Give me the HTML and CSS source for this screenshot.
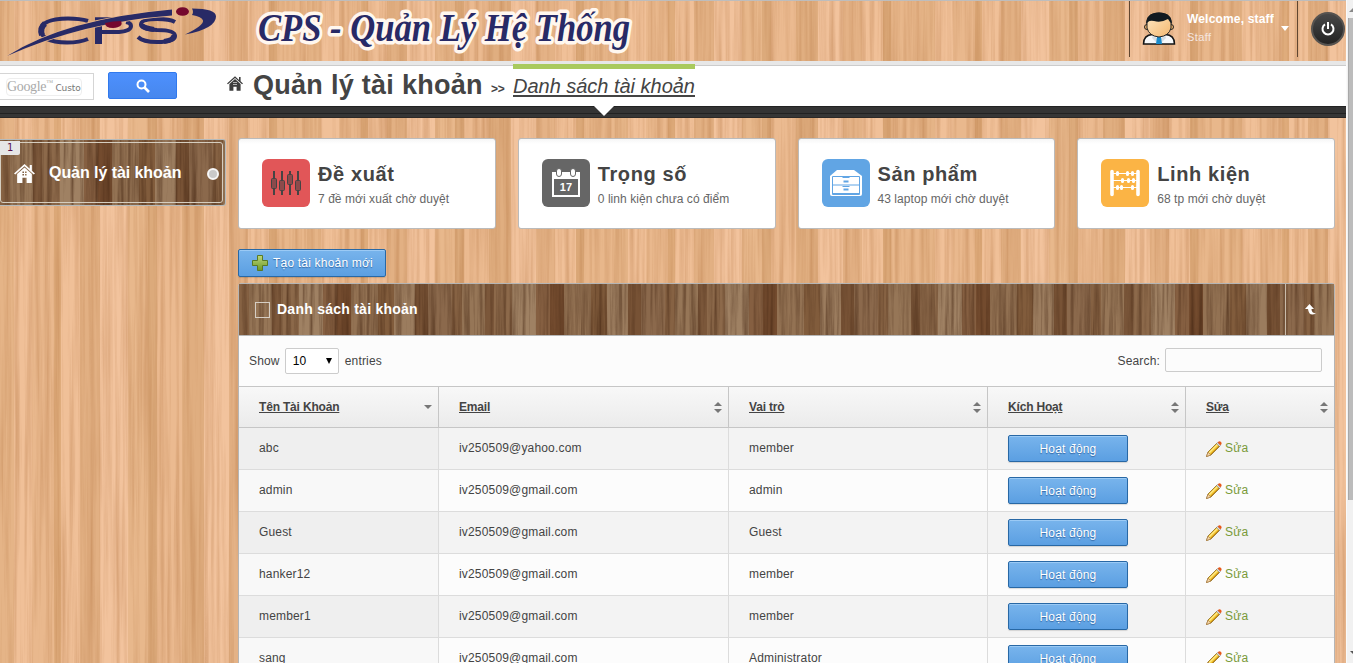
FILE: index.html
```html
<!DOCTYPE html>
<html lang="vi">
<head>
<meta charset="utf-8">
<title>CPS - Quản Lý Hệ Thống</title>
<link rel="stylesheet" href="styles.css">
</head>
<body>
<svg class="defs" width="0" height="0" aria-hidden="true">
  <defs>
    <filter id="grain-light" x="0" y="0" width="100%" height="100%" color-interpolation-filters="sRGB">
      <feTurbulence type="fractalNoise" baseFrequency="0.2 0.004" numOctaves="5" seed="4"/>
      <feColorMatrix values="0 0 0 0 .72  0 0 0 0 .48  0 0 0 0 .28  .9 0 0 0 -.34"/>
    </filter>
    <filter id="grain-dark" x="0" y="0" width="100%" height="100%" color-interpolation-filters="sRGB">
      <feTurbulence type="fractalNoise" baseFrequency="0.25 0.008" numOctaves="5" seed="9"/>
      <feColorMatrix values="0 0 0 0 .28  0 0 0 0 .16  0 0 0 0 .08  1.300 0 0 0 -.5"/>
    </filter>
    <linearGradient id="plus-fill" x2="0" y2="1"><stop stop-color="#bcd67c"/><stop offset="1" stop-color="#6d9a26"/></linearGradient>
    <linearGradient id="face" x2="1" y2="1"><stop stop-color="#ffe9c5"/><stop offset="1" stop-color="#f3b76f"/></linearGradient>
    <symbol id="home" viewBox="0 0 20 18">
      <path d="M0 9 10 0l5 4.500V1h2v5.300L20 9l-1.200 1L10 2.200 1.200 10z"/>
      <path fill-rule="evenodd" d="M3 9.500 10 3.300l7 6.200V18h-5v-5H8v5H3zM8 7v1.500h1.500V7zm2.500 0v1.500H12V7zM8 9.500V11h1.500V9.500zm2.500 0V11H12V9.500z"/>
    </symbol>
    <symbol id="pencil" viewBox="0 0 16 16">
      <path d="M.5 15.500 2 11 11 2l3 3-9 9z" fill="#f2c52d" stroke="#8d6a20" stroke-width=".8"/>
      <path d="M3 12 12 3" stroke="#ffe98a" stroke-width="1.300"/>
      <path d="m4.500 13.500 9-9" stroke="#c98d17" stroke-width="1"/>
      <path d="M.5 15.500 2 11.200l2.800 2.700z" fill="#f5d9ae" stroke="#a5703d" stroke-width=".6"/>
      <path d="m10.500 2.500 3 3 1-1-3-3z" fill="#ddd" stroke="#777" stroke-width=".5"/>
      <path d="m11.700 1.500 1-1q1.300-.5 2.300.5t.4 2.300l-1 1z" fill="#e8591a"/>
    </symbol>
  </defs>
</svg>
<div class="window">
<div class="page wood">
  <svg class="grain" aria-hidden="true"><rect width="100%" height="100%" filter="url(#grain-light)"/></svg>
  <header class="top">
    <svg class="brand" width="220" height="60" viewBox="0 0 220 60" role="img" aria-label="CPS">
      <g fill="none" stroke="#282a66">
        <path stroke-width="4" d="M88 20Q80 17.500 68 17.500 41 18 41 29q0 12 26 12.500 13 0 21-3.500"/>
        <path stroke-width="6" d="M42 34q-2.500-7 3-11.500"/>
        <path stroke-width="3.500" d="M95 18h20"/>
        <path stroke-width="4" d="M102 31h17q12-1 12-6 0-3-5-4"/>
        <path stroke-width="7" d="M98.500 25v18"/>
        <path stroke-width="4" d="M175 21q-5-3-18-3-16 0-16 5.500 0 5 16 5.500 18 0 18 6 0 6-18 6-14 0-19-5"/>
        <path stroke-width="5" d="M142 23q0 4 12 5.500M174 34q0 5-10 6.500"/>
      </g>
      <path d="M7 55Q65 18 172 8.500v6Q83 21 7 55z" fill="#282a66" stroke="#e7b68b" stroke-width="1.500"/>
      <path d="M7 55Q65 18 172 8.500v6Q83 21 7 55z" fill="#282a66"/>
      <path d="M105 22q8-2 16-2 3 6-8 7-8 0-8-5z" fill="#75082e"/>
      <ellipse cx="182.500" cy="10.500" rx="6.500" ry="4.300" fill="#75082e"/>
      <path d="M192 7.500q24 0 24 8 0 12-31 18 19-9 18-14-1-4-11-5.500 2-3 0-6.500z" fill="#282a66"/>
    </svg>
    <svg class="site-title" width="400" height="60" viewBox="0 0 400 60">
      <text x="14" y="40" textLength="372" lengthAdjust="spacingAndGlyphs">CPS - Quản Lý Hệ Thống</text>
    </svg>
    <div class="user">
      <svg width="34" height="34" viewBox="0 0 34 34">
        <path d="M1.500 32q0-9 9-9.500h13q9 .5 9 9.500z" fill="#f7f9fb" stroke="#151515" stroke-width="1.500"/>
        <path d="m11 23 6 5 6-5 1 3-5 5-2-3-2 3-5-5z" fill="#d6dfe6"/><path d="M15 25h4l1 7h-6z" fill="#198ac9"/>
        <circle cx="5" cy="15" r="2.500" fill="#f0b46c" stroke="#222"/><circle cx="29" cy="15" r="2.500" fill="#f0b46c" stroke="#222"/>
        <path d="M5 10Q5 1 17 1t12 9v6q-2 8-12 9Q7 24 5 16z" fill="url(#face)" stroke="#222"/>
        <path d="M4 12Q4 1 17 .5 30 1 30 12l-2-2-2-3q-7 4-14 2-4-1-6 1z" fill="#111a20"/>
      </svg>
      <div class="user-name"><b>Welcome, staff</b><span>Staff</span></div>
      <i class="caret"></i>
    </div>
    <div class="logout"><svg width="16" height="16" viewBox="0 0 16 16" fill="none" stroke="#fff" stroke-width="2"><path d="M5 3.300a5.500 5.500 0 1 0 6 0M8 1v7"/></svg></div>
  </header>
  <nav class="crumbs">
    <div class="g-input"><span><em>Google<sup>™</sup></em> Custo</span></div>
    <div class="g-button"><svg width="14" height="14" viewBox="0 0 14 14" fill="none" stroke="#fff" stroke-width="2"><circle cx="5.500" cy="5.500" r="4"/><path stroke-width="2.600" d="m8.500 8.500 4.500 4.500"/></svg></div>
    <svg class="crumb-home" width="16" height="15"><use href="#home"/></svg>
    <h1>Quản lý tài khoản</h1>
    <span class="sep">&gt;&gt;</span>
    <a class="current">Danh sách tài khoản</a>
  </nav>
  <div class="strip"></div>
  <div class="body">
    <aside class="side">
      <div class="menu darkwood">
        <svg class="grain" aria-hidden="true"><rect width="100%" height="100%" filter="url(#grain-dark)"/></svg>
        <div class="menu-inner">
          <svg width="21" height="19" fill="#fff"><use href="#home"/></svg>
          <b>Quản lý tài khoản</b><i class="dot"></i>
        </div>
        <span class="count">1</span>
      </div>
    </aside>
    <main>
      <section class="cards">
        <div class="card"><svg class="tile red" viewBox="0 0 48 48"><g stroke="#444" stroke-width="2"><path d="M12 12v24M20 12v24M28 12v24M36 12v24"/></g><g fill="#8c4a4b" stroke="#444"><rect x="9.500" y="19.500" width="5" height="10" rx="1"/><rect x="17.500" y="21.500" width="5" height="10" rx="1"/><rect x="25.500" y="15.500" width="5" height="10" rx="1"/><rect x="33.500" y="21.500" width="5" height="10" rx="1"/></g></svg><div><h2>Đề xuất</h2><p>7 đề mới xuất chờ duyệt</p></div></div>
        <div class="card"><svg class="tile gray" viewBox="0 0 48 48"><path fill="#fff" fill-rule="evenodd" d="M10 13h28v25H10zM12 20v16h24V20z"/><g fill="#fff" stroke="#666" stroke-width="1"><rect x="14.500" y="9.500" width="5" height="8" rx="2.500"/><rect x="28.500" y="9.500" width="5" height="8" rx="2.500"/></g><text x="24" y="32" class="date" text-anchor="middle">17</text></svg><div><h2>Trọng số</h2><p>0 linh kiện chưa có điểm</p></div></div>
        <div class="card"><svg class="tile blue" viewBox="0 0 48 48"><path d="M15 11h17l8 6v18q0 2-2 2H10q-2 0-2-2V17z" fill="#fff"/><g fill="none" stroke="#61a5e4"><path d="M10.500 17.500h27v18h-27zM10.500 26h27M20.500 18.500h7M20.500 27.500h7M10.500 34.500h27"/><path d="M21.500 22.500h5M21.500 30.500h5" stroke-width="2"/></g></svg><div><h2>Sản phẩm</h2><p>43 laptop mới chờ duyệt</p></div></div>
        <div class="card"><svg class="tile gold" viewBox="0 0 48 48"><g stroke="#fff" stroke-linecap="round" fill="none"><path d="M11 12.500v23M37 12.500v23" stroke-width="3.600"/><path d="M11 14.500h26M11 21.500h26M11 28.500h26"/><path stroke-width="3" d="M16.500 13.500v2M26.500 13.500v2M31.500 13.500v2M21.500 20.500v2M27.500 20.500v2M32.500 20.500v2M16.500 27.500v2M20.500 27.500v2M31.500 27.500v2"/></g></svg><div><h2>Linh kiện</h2><p>68 tp mới chờ duyệt</p></div></div>
      </section>
      <a class="btn create"><svg width="16" height="16" viewBox="0 0 16 16"><path d="M5.500.5h5v5h5v5h-5v5h-5v-5h-5v-5h5z" fill="url(#plus-fill)" stroke="#587a25"/></svg>Tạo tài khoản mới</a>
      <section class="panel">
        <div class="panel-head darkwood">
          <svg class="grain" aria-hidden="true"><rect width="100%" height="100%" filter="url(#grain-dark)"/></svg>
          <i class="check"></i><b>Danh sách tài khoản</b>
          <span class="fold"><svg width="11" height="11" viewBox="0 0 11 11"><path fill="#fff" d="M4.500 0 9 5H6.500q0 4 4.500 4.500Q4 13 3 5H0z"/></svg></span>
        </div>
        <div class="tools">
          <span>Show</span><span class="select">10<i></i></span><span>entries</span>
          <label>Search:</label><input class="search" type="text" aria-label="Search">
        </div>
        <table>
          <colgroup><col class="c1"><col class="c2"><col class="c3"><col class="c4"><col class="c5"></colgroup>
          <thead><tr>
            <th><div><u>Tên Tài Khoản</u><i class="sort down"></i></div></th>
            <th><div><u>Email</u><i class="sort"></i></div></th>
            <th><div><u>Vai trò</u><i class="sort"></i></div></th>
            <th><div><u>Kích Hoạt</u><i class="sort"></i></div></th>
            <th><div><u>Sửa</u><i class="sort"></i></div></th>
          </tr></thead>
          <tbody>
            <tr><td>abc</td><td>iv250509@yahoo.com</td><td>member</td><td><a class="btn">Hoạt động</a></td><td><a class="edit"><svg width="16" height="16"><use href="#pencil"/></svg><span>Sửa</span></a></td></tr>
            <tr><td>admin</td><td>iv250509@gmail.com</td><td>admin</td><td><a class="btn">Hoạt động</a></td><td><a class="edit"><svg width="16" height="16"><use href="#pencil"/></svg><span>Sửa</span></a></td></tr>
            <tr><td>Guest</td><td>iv250509@gmail.com</td><td>Guest</td><td><a class="btn">Hoạt động</a></td><td><a class="edit"><svg width="16" height="16"><use href="#pencil"/></svg><span>Sửa</span></a></td></tr>
            <tr><td>hanker12</td><td>iv250509@gmail.com</td><td>member</td><td><a class="btn">Hoạt động</a></td><td><a class="edit"><svg width="16" height="16"><use href="#pencil"/></svg><span>Sửa</span></a></td></tr>
            <tr><td>member1</td><td>iv250509@gmail.com</td><td>member</td><td><a class="btn">Hoạt động</a></td><td><a class="edit"><svg width="16" height="16"><use href="#pencil"/></svg><span>Sửa</span></a></td></tr>
            <tr><td>sang</td><td>iv250509@gmail.com</td><td>Administrator</td><td><a class="btn">Hoạt động</a></td><td><a class="edit"><svg width="16" height="16"><use href="#pencil"/></svg><span>Sửa</span></a></td></tr>
          </tbody>
        </table>
      </section>
    </main>
  </div>
</div>
<div class="scrollbar"><svg width="7" height="18" viewBox="0 0 7 18"><path d="M2 12 6 8l1 1v3z" fill="#888"/></svg><i></i><svg width="7" height="18" viewBox="0 0 7 18"><path d="M3 6h4v4z" fill="#555"/></svg></div>
</div>
</body>
</html>
```
FILE: styles.css
```css
* { box-sizing: border-box; }
body { margin: 0; font: 12px "Liberation Sans", Arial, sans-serif; letter-spacing: .17px; color: #444; }
.defs { position: absolute; }
.window { display: flex; height: 663px; overflow: hidden; }
.page { position: relative; flex: 1; min-width: 0; height: 663px; overflow: hidden; isolation: isolate; border-top: 1px solid #bdbdbd; }
.grain { position: absolute; inset: 0; width: 100%; height: 100%; z-index: -1; }
.wood {
  background: repeating-linear-gradient(90deg, #e5b487 0 14px, #f0c098 14px 32px, #e9b88d 32px 54px, #dfac7c 54px 61px, #f0c098 61px 80px, #e2b083 80px 100px, #f2c39d 100px 128px, #e8b88c 128px 148px, #dcaa7b 148px 157px, #ebba90 157px 182px, #e0ae80 182px 204px, #f2c39d 204px 229px, #e4b286 229px 248px, #f0c098 248px 269px, #dba878 269px 277px, #e8b78b 277px 307px);
}
.darkwood {
  position: relative; isolation: isolate;
  background: repeating-linear-gradient(90deg, #866243 0 10px, #967657 10px 33px, #7b573a 33px 42px, #8c694a 42px 60px, #9f8163 60px 84px, #855f41 84px 98px, #734b2e 98px 112px, #937253 112px 139px, #815c3c 139px 155px, #9b7c5e 155px 176px, #775235 176px 189px, #8b694c 189px 213px);
}
.top { display: flex; height: 60px; color: #fff; }
.brand { flex: none; }
.site-title { margin-left: 24px; flex: none; }
.site-title text { font: italic bold 40px "Liberation Serif", serif; letter-spacing: 0; fill: #282a66; stroke: #fff7ef; stroke-width: 7px; stroke-linejoin: round; paint-order: stroke; }
.user { margin-left: auto; display: flex; height: 56px; width: 169px; border: solid #604630; border-width: 0 1px; padding: 11px 0 0 12px; }
.user-name { display: flex; flex-direction: column; margin-left: 11px; width: 98px; white-space: nowrap; line-height: 15px; }
.user-name span { color: #f4e6e0; font-size: 11px; letter-spacing: .4px; margin-top: 3px; }
.caret { margin-top: 14px; height: 0; border: solid transparent; border-top-color: #fff; border-width: 5px 4px 0; margin-left: -4px; }
.logout { width: 34px; height: 34px; margin: 11px 1px 0 13px; border-radius: 50%; border: 2px solid #565350; background: linear-gradient(#484848, #232323); display: grid; place-items: center; flex: none; }
.crumbs { display: flex; height: 45px; background: #fff; border-top: 4px solid #e7e7e7; position: relative; box-shadow: inset 0 1px #ccc; }
.g-input { width: 94px; height: 27px; margin-top: 8px; border: 1px solid #d5d5d5; border-left: 0; padding: 4px 0 0 6px; }
.g-input span { display: block; width: 76px; height: 18px; border: 1px solid #eee; border-radius: 4px; white-space: nowrap; font: 9px/17px "DejaVu Sans", sans-serif; letter-spacing: -.1px; color: #777; }
.g-input em { font: 14px/16px "Liberation Serif", serif; color: #aaa; letter-spacing: -.35px; }
.g-input sup { font-size: 7px; line-height: 0; }
.g-button { width: 69px; height: 27px; margin: 7px 0 0 14px; border: 1px solid #3079ed; border-radius: 2px; background: linear-gradient(#4d90fe, #4787ed); display: grid; place-items: center; }
.crumb-home { margin: 11px 0 0 50px; fill: #3c3c3c; flex: none; }
h1 { margin: 3px 0 0 10px; width: 238px; font-size: 27px; line-height: 34px; letter-spacing: .28px; white-space: nowrap; }
.sep { width: 22px; margin-top: 17px; font-weight: bold; letter-spacing: -.2px; }
.current { position: relative; width: 182px; white-space: nowrap; font: italic 20px/25px "Liberation Sans", sans-serif; letter-spacing: -.02px; margin-top: 9px; height: 23px; border-bottom: 2px solid #444; }
.current::before { content: ""; position: absolute; left: 0; right: 0; top: -10px; height: 5px; background: #a9ca5d; }
.current::after { content: ""; position: absolute; left: 81px; top: 32px; border: solid transparent; border-top-color: #fff; border-width: 10px 10px 0; z-index: 2; }
.strip { height: 12px; background: linear-gradient(#222 0 1px, #343434 1px 7px, #222 7px 8px, #363636 8px 11px, #2c2927 11px); }
.body { display: flex; gap: 12px; }
.side { width: 226px; padding-top: 21px; }
.menu { height: 67px; border: 1px solid #b5babb; border-left: 0; border-radius: 0 3px 3px 0; padding: 2px 2px 2px 0; }
.menu-inner { height: 61px; border: 1px solid #d5cdbf; border-radius: 3px; display: flex; align-items: center; padding: 2px 3px 0 13px; color: #fff; font-size: 16px; }
.menu-inner b { margin: -2px 0 0 14px; letter-spacing: -.06px; white-space: nowrap; }
.dot { width: 12px; height: 12px; border-radius: 50%; background: #c9c9c9; border: 2px solid #f7f7f7; margin-left: auto; }
.count { position: absolute; left: 0; top: 1px; width: 20px; height: 14px; padding-left: 7px; font: 10px/14px "DejaVu Sans", sans-serif; color: #57124d; background: #e6e6e6; border-radius: 0 0 2px 0; }
main { width: 1097px; padding-top: 20px; flex: none; }
.cards { display: grid; grid-template-columns: repeat(4, 1fr); gap: 22px; }
.card { height: 91px; display: flex; gap: 8px; padding: 20px 0 0 23px; border: 1px solid #bbb; border-radius: 3px; background: linear-gradient(#f6f6f6, #fff 5px); }
.tile { width: 48px; height: 48px; border-radius: 6px; flex: none; }
.red { background: #e15658; } .gray { background: #666; } .blue { background: #61a5e4; } .gold { background: #fbb445; }
.date { font: bold 11px "Liberation Sans", sans-serif; fill: #fff; }
h2 { margin: 2px 0 0; font-size: 20px; line-height: 26px; letter-spacing: .6px; }
.card p { margin: 3px 0 0; line-height: 18px; letter-spacing: .06px; color: #666; white-space: nowrap; }
.btn { display: flex; align-items: center; justify-content: center; width: 120px; height: 27px; border: 1px solid #2868a5; border-radius: 2px; background: linear-gradient(#78b4ec, #5b9fe2); box-shadow: inset 0 1px #9bcaf5, 0 1px 1px #0002; color: #fff; text-shadow: 0 1px 1px #3267a4; }
.create { width: 148px; height: 28px; margin-top: 20px; padding-left: 1px; gap: 5px; letter-spacing: .2px; white-space: nowrap; }
.panel { margin-top: 6px; border: 1px solid #b5b5b5; border-radius: 3px 3px 0 0; background: #fcfcfc; }
.panel-head { height: 52px; border-bottom: 1px solid #b7b7b7; display: flex; align-items: center; padding-left: 16px; color: #fff; font-size: 14px; letter-spacing: .25px; }
.panel-head b { margin-top: -2px; }
.check { width: 15px; height: 16px; border: 1px solid #d5cdc3; margin-right: 7px; }
.fold { width: 49px; height: 51px; margin-left: auto; border-left: 1px solid #c9bbaa; display: grid; place-items: center; }
.tools { height: 50px; display: flex; align-items: center; padding: 0 12px 0 10px; }
.select { width: 54px; height: 26px; margin: 0 6px 0 5px; border: 1px solid #ccc; border-radius: 2px; background: #fff; color: #000; display: flex; align-items: center; justify-content: space-between; padding: 0 6px 0 7px; }
.select i { border: solid transparent; border-top-color: #000; border-width: 6px 3.5px 0; }
.tools label { margin-left: auto; }
.search { width: 157px; height: 24px; margin: -2px 0 0 5px; border: 1px solid #ccc; border-radius: 2px; background: #fcfcfc; }
table { width: 1095px; table-layout: fixed; border-collapse: separate; border-spacing: 0; }
.c1 { width: 200px; } .c2 { width: 290px; } .c3 { width: 259px; } .c4 { width: 198px; } .c5 { width: 148px; }
th { height: 42px; padding: 0 6px 0 20px; text-align: left; letter-spacing: -.18px; border: solid #c6c6c6; border-width: 1px 1px 1px 0; background: linear-gradient(#f8f8f8, #ebebeb); }
th div { display: flex; align-items: center; justify-content: space-between; }
td { height: 42px; padding: 0 0 2px 20px; border: solid #dcdcdc; border-width: 0 1px 1px 0; white-space: nowrap; }
td .btn { margin-top: 2px; }
th:last-child, td:last-child { border-right: 0; }
tbody tr:nth-child(odd) { background: #f3f3f3; }
tbody tr:nth-child(odd) td:first-child { background: #efefef; }
tbody tr:nth-child(even) td:first-child { background: #f8f8f8; }
.sort { display: flex; flex-direction: column; gap: 3px; }
.sort::before, .sort::after { content: ""; border: solid transparent; border-width: 0 4px 4px; border-bottom-color: #777; }
.sort::after { border-width: 4px 4px 0; border-top-color: #777; }
.down::before { display: none; }
.edit { display: flex; align-items: center; gap: 3px; color: #799a38; }
.edit svg { margin-top: 2px; }
.scrollbar { width: 7px; display: flex; flex-direction: column; background: #f1f1f1; border-left: 1px solid #fafafa; flex: none; }
.scrollbar i { height: 482px; margin-left: 1px; background: #bcbcbc; border-left: 1px solid #a8a8a8; }
.scrollbar svg:last-child { margin-top: auto; }
```
